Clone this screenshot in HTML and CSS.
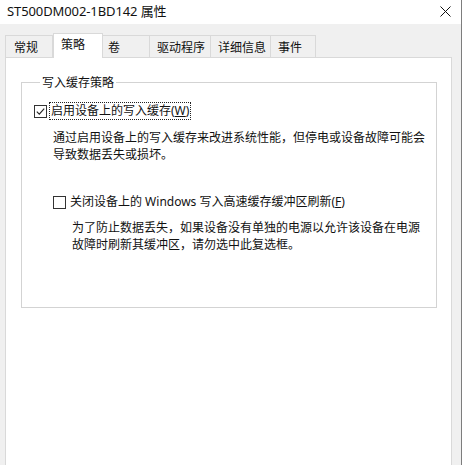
FILE: index.html
```html
<!DOCTYPE html>
<html lang="zh-CN">
<head>
<meta charset="utf-8">
<title>ST500DM002-1BD142 属性</title>
<link rel="stylesheet" href="styles.css">
</head>
<body>
<div class="window">
  <div class="titlebar">
    <span class="title">ST500DM002-1BD142 属性</span>
    <svg class="close" width="11" height="11" viewBox="0 0 11 11"><path d="M0.5 0.5 L10.5 10.5 M10.5 0.5 L0.5 10.5" stroke="#111" stroke-width="1" fill="none"/></svg>
  </div>
  <div class="client">
    <div class="tabs">
      <div class="tab w48">常规</div>
      <div class="tab active w50">策略</div>
      <div class="tab w47 tight">卷</div>
      <div class="tab w61">驱动程序</div>
      <div class="tab w60">详细信息</div>
      <div class="tab w45">事件</div>
    </div>
    <div class="panel">
      <fieldset class="group">
        <legend>写入缓存策略</legend>
        <div class="check first">
          <span class="box">
            <svg width="13" height="13" viewBox="0 0 13 13"><rect x="0.5" y="0.5" width="12" height="12" fill="#fff" stroke="#333"/><path d="M2.8 6.6 L5.3 9.2 L10.2 3.6" stroke="#222" stroke-width="1.1" fill="none"/></svg>
          </span>
          <span class="lbl focus">启用设备上的写入缓存(<u>W</u>)</span>
        </div>
        <p class="desc">通过启用设备上的写入缓存来改进系统性能，但停电或设备故障可能会<br>导致数据丢失或损坏。</p>
        <div class="check second">
          <span class="box">
            <svg width="13" height="13" viewBox="0 0 13 13"><rect x="0.5" y="0.5" width="12" height="12" fill="#fff" stroke="#333"/></svg>
          </span>
          <span class="lbl">关闭设备上的 Windows 写入高速缓存缓冲区刷新(<u>F</u>)</span>
        </div>
        <p class="desc sub">为了防止数据丢失，如果设备没有单独的电源以允许该设备在电源<br>故障时刷新其缓冲区，请勿选中此复选框。</p>
      </fieldset>
    </div>
  </div>
</div>
</body>
</html>
```
FILE: styles.css
```css
html, body {
  margin: 0;
  padding: 0;
  background: #ffffff;
}
body {
  width: 467px;
  height: 465px;
  overflow: hidden;
  font-family: "Noto Sans", "Noto Sans CJK SC", sans-serif;
  color: #111;
  font-size: 12px;
}
.window {
  width: 461px;
  height: 465px;
  border-right: 1px solid #7d7d7d;
  background: #f0f0f0;
  display: flex;
  flex-direction: column;
}
.titlebar {
  height: 24px;
  background: #ffffff;
  display: flex;
  align-items: center;
  justify-content: space-between;
  padding: 0 10px 4px 7px;
  box-sizing: border-box;
}
.title {
  font-size: 13px;
  color: #111;
  letter-spacing: -0.1px;
}
.close {
  display: block;
  margin-top: 2px;
}
.client {
  flex: 1;
  padding: 9px 9px 0 5px;
  display: flex;
  flex-direction: column;
  min-height: 0;
}
.tabs {
  display: flex;
  align-items: flex-end;
  height: 24px;
  position: relative;
  z-index: 1;
}
.tab {
  box-sizing: border-box;
  height: 22px;
  padding: 2px 0 0 7px;
  line-height: 18px;
  border: 1px solid #d9d9d9;
  border-bottom: none;
  border-left: none;
  background: #f0f0f0;
  font-family: "Noto Sans CJK SC", sans-serif;
  font-size: 12px;
  color: #111;
}
.tab:first-child {
  border-left: 1px solid #d9d9d9;
  padding-left: 8px;
}
.tab.active {
  height: 25px;
  margin-bottom: -1px;
  background: #ffffff;
  border-left: 1px solid #d9d9d9;
  padding: 1px 0 0 7px;
}
.tab.tight { padding-left: 5px; }
.w48 { width: 48px; }
.w50 { width: 50px; }
.w47 { width: 47px; }
.w61 { width: 61px; }
.w60 { width: 60px; }
.w45 { width: 45px; }
.panel {
  flex: 1;
  background: #ffffff;
  border: 1px solid #d9d9d9;
  border-bottom: none;
  padding: 16px 14px 0 15px;
}
.group {
  margin: 0;
  padding: 0 0 55px 12px;
  border: 1px solid #d3d3d3;
  min-width: 0;
}
.group legend {
  font-family: "Noto Sans CJK SC", sans-serif;
  font-size: 12px;
  line-height: 16px;
  padding: 0 2px;
  margin-left: 6px;
  color: #111;
}
.check {
  display: flex;
  align-items: center;
  height: 18px;
}
.check.first { margin-top: 12px; }
.check.second { margin-top: 31px; margin-left: 19px; }
.box {
  display: block;
  width: 13px;
  height: 13px;
  margin-right: 2px;
}
.box svg { display: block; }
.lbl {
  font-family: "Noto Sans", "Noto Sans CJK SC", sans-serif;
  font-size: 12px;
  line-height: 16px;
  padding: 0 1px;
  border: 1px dotted transparent;
  white-space: nowrap;
}
.lbl.focus {
  border-color: #222;
}
.lbl u {
  text-decoration: underline;
  text-underline-offset: 1px;
}
.desc {
  margin: 8px 0 0 19px;
  font-family: "Noto Sans CJK SC", sans-serif;
  font-size: 12px;
  line-height: 17px;
  color: #111;
  white-space: nowrap;
}
.desc.sub {
  margin: 7px 0 0 38px;
}
```
